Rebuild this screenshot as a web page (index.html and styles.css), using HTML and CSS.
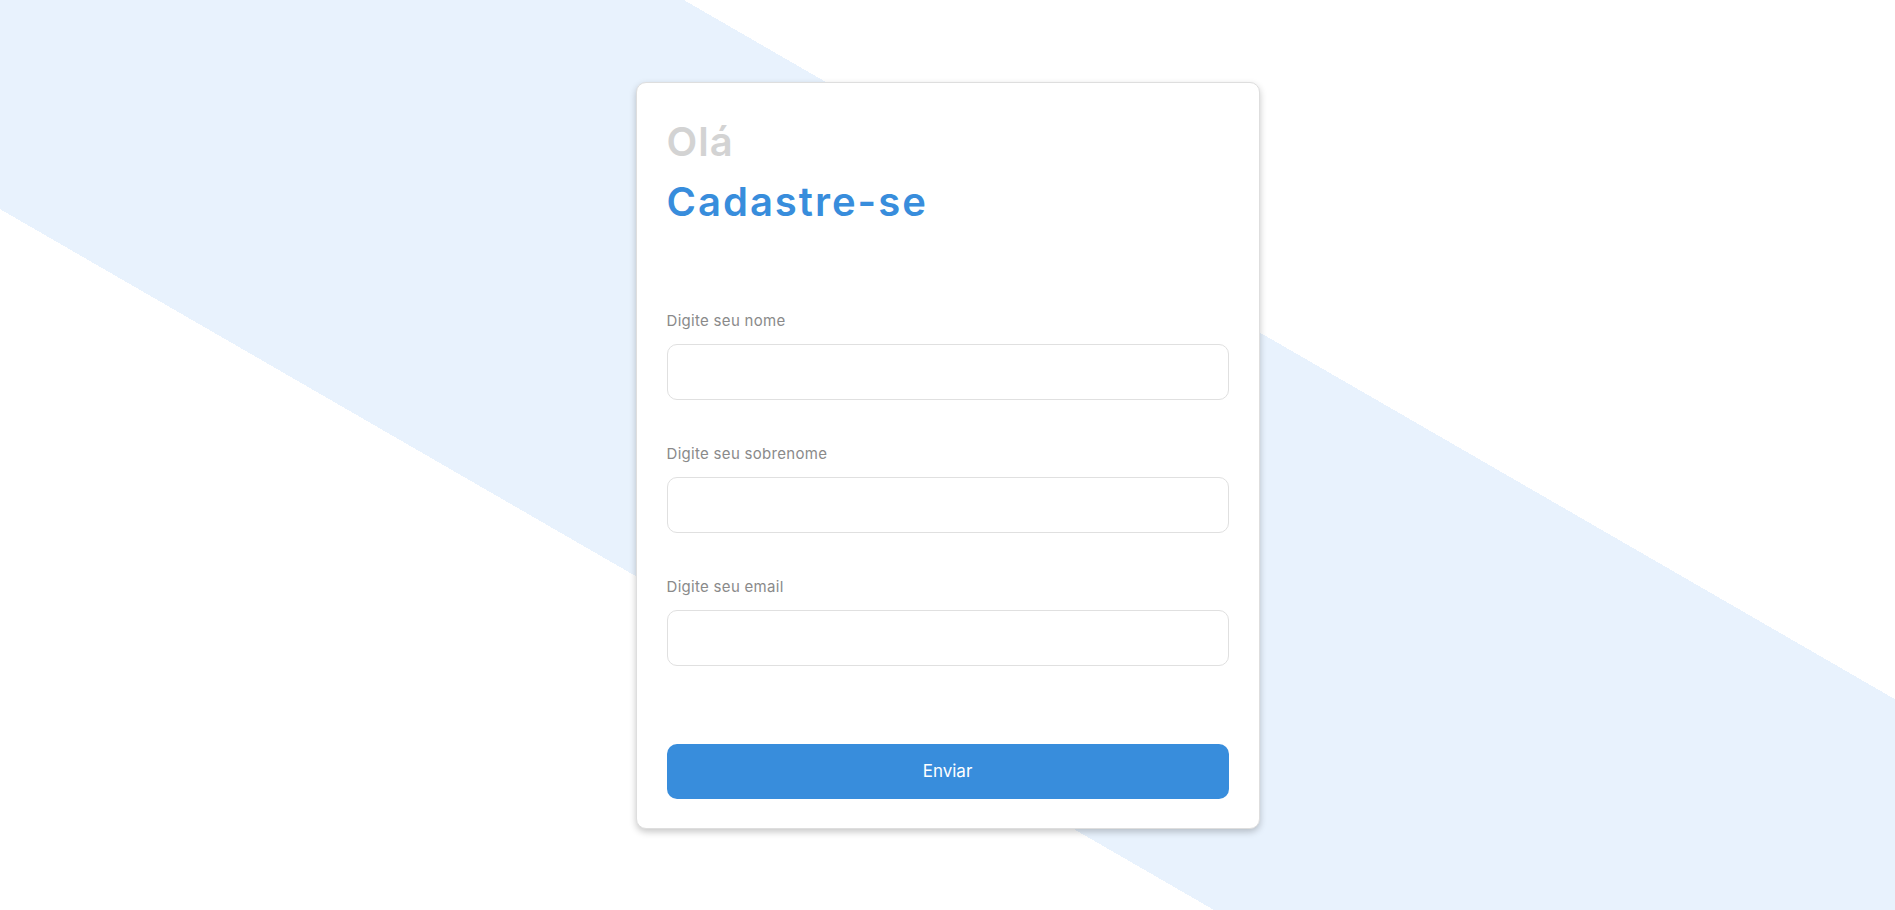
FILE: index.html
```html
<!DOCTYPE html>
<html lang="pt-BR">
<head>
<meta charset="utf-8">
<title>Cadastre-se</title>
<link rel="stylesheet" href="styles.css">
</head>
<body>
<main class="page">
  <form class="card">
    <h2 class="hello">Olá</h2>
    <h1 class="title">Cadastre-se</h1>
    <div class="fields">
      <div class="field">
        <label class="label" for="nome">Digite seu nome</label>
        <input class="input" id="nome" type="text">
      </div>
      <div class="field">
        <label class="label" for="sobrenome">Digite seu sobrenome</label>
        <input class="input" id="sobrenome" type="text">
      </div>
      <div class="field">
        <label class="label" for="email">Digite seu email</label>
        <input class="input" id="email" type="email">
      </div>
    </div>
    <button class="submit" type="button">Enviar</button>
  </form>
</main>
</body>
</html>
```
FILE: styles.css
```css
* {
  box-sizing: border-box;
}

html, body {
  margin: 0;
  padding: 0;
  height: 100%;
}

body {
  font-family: "Inter", "Open Sans", sans-serif;
  background: #fff;
}

.page {
  height: 100vh;
  display: flex;
  align-items: center;
  justify-content: center;
  background: linear-gradient(30deg, #ffffff 607px, #e8f2fd 607px, #e8f2fd 1130px, #ffffff 1130px);
}

.card {
  width: 624px;
  background: #fff;
  border: 1px solid #dedede;
  border-radius: 10px;
  box-shadow: 0 3px 7px rgba(0, 0, 0, 0.22);
  padding: 29px 30px 29px 30px;
  display: flex;
  flex-direction: column;
}

.hello,
.title {
  margin: 0;
  font-size: 40px;
  line-height: 60px;
  font-weight: 600;
  letter-spacing: 1px;
}

.hello {
  color: #d3d3d3;
}

.title {
  color: #388ddc;
  letter-spacing: 2px;
}

.fields {
  margin-top: 79px;
  display: flex;
  flex-direction: column;
  gap: 44px;
}

.field {
  display: flex;
  flex-direction: column;
  gap: 13px;
}

.label {
  font-size: 15px;
  line-height: 20px;
  color: #8a8a8a;
  letter-spacing: 0.3px;
}

.input {
  height: 56px;
  width: 100%;
  border: 1px solid #e0e0e0;
  border-radius: 10px;
  background: #fff;
  font: inherit;
  padding: 0 16px;
  outline: none;
}

.submit {
  margin-top: 78px;
  height: 55px;
  width: 100%;
  border: none;
  border-radius: 10px;
  background: #388ddc;
  color: #fff;
  font-family: inherit;
  font-size: 17px;
  font-weight: 400;
  cursor: pointer;
}
```
